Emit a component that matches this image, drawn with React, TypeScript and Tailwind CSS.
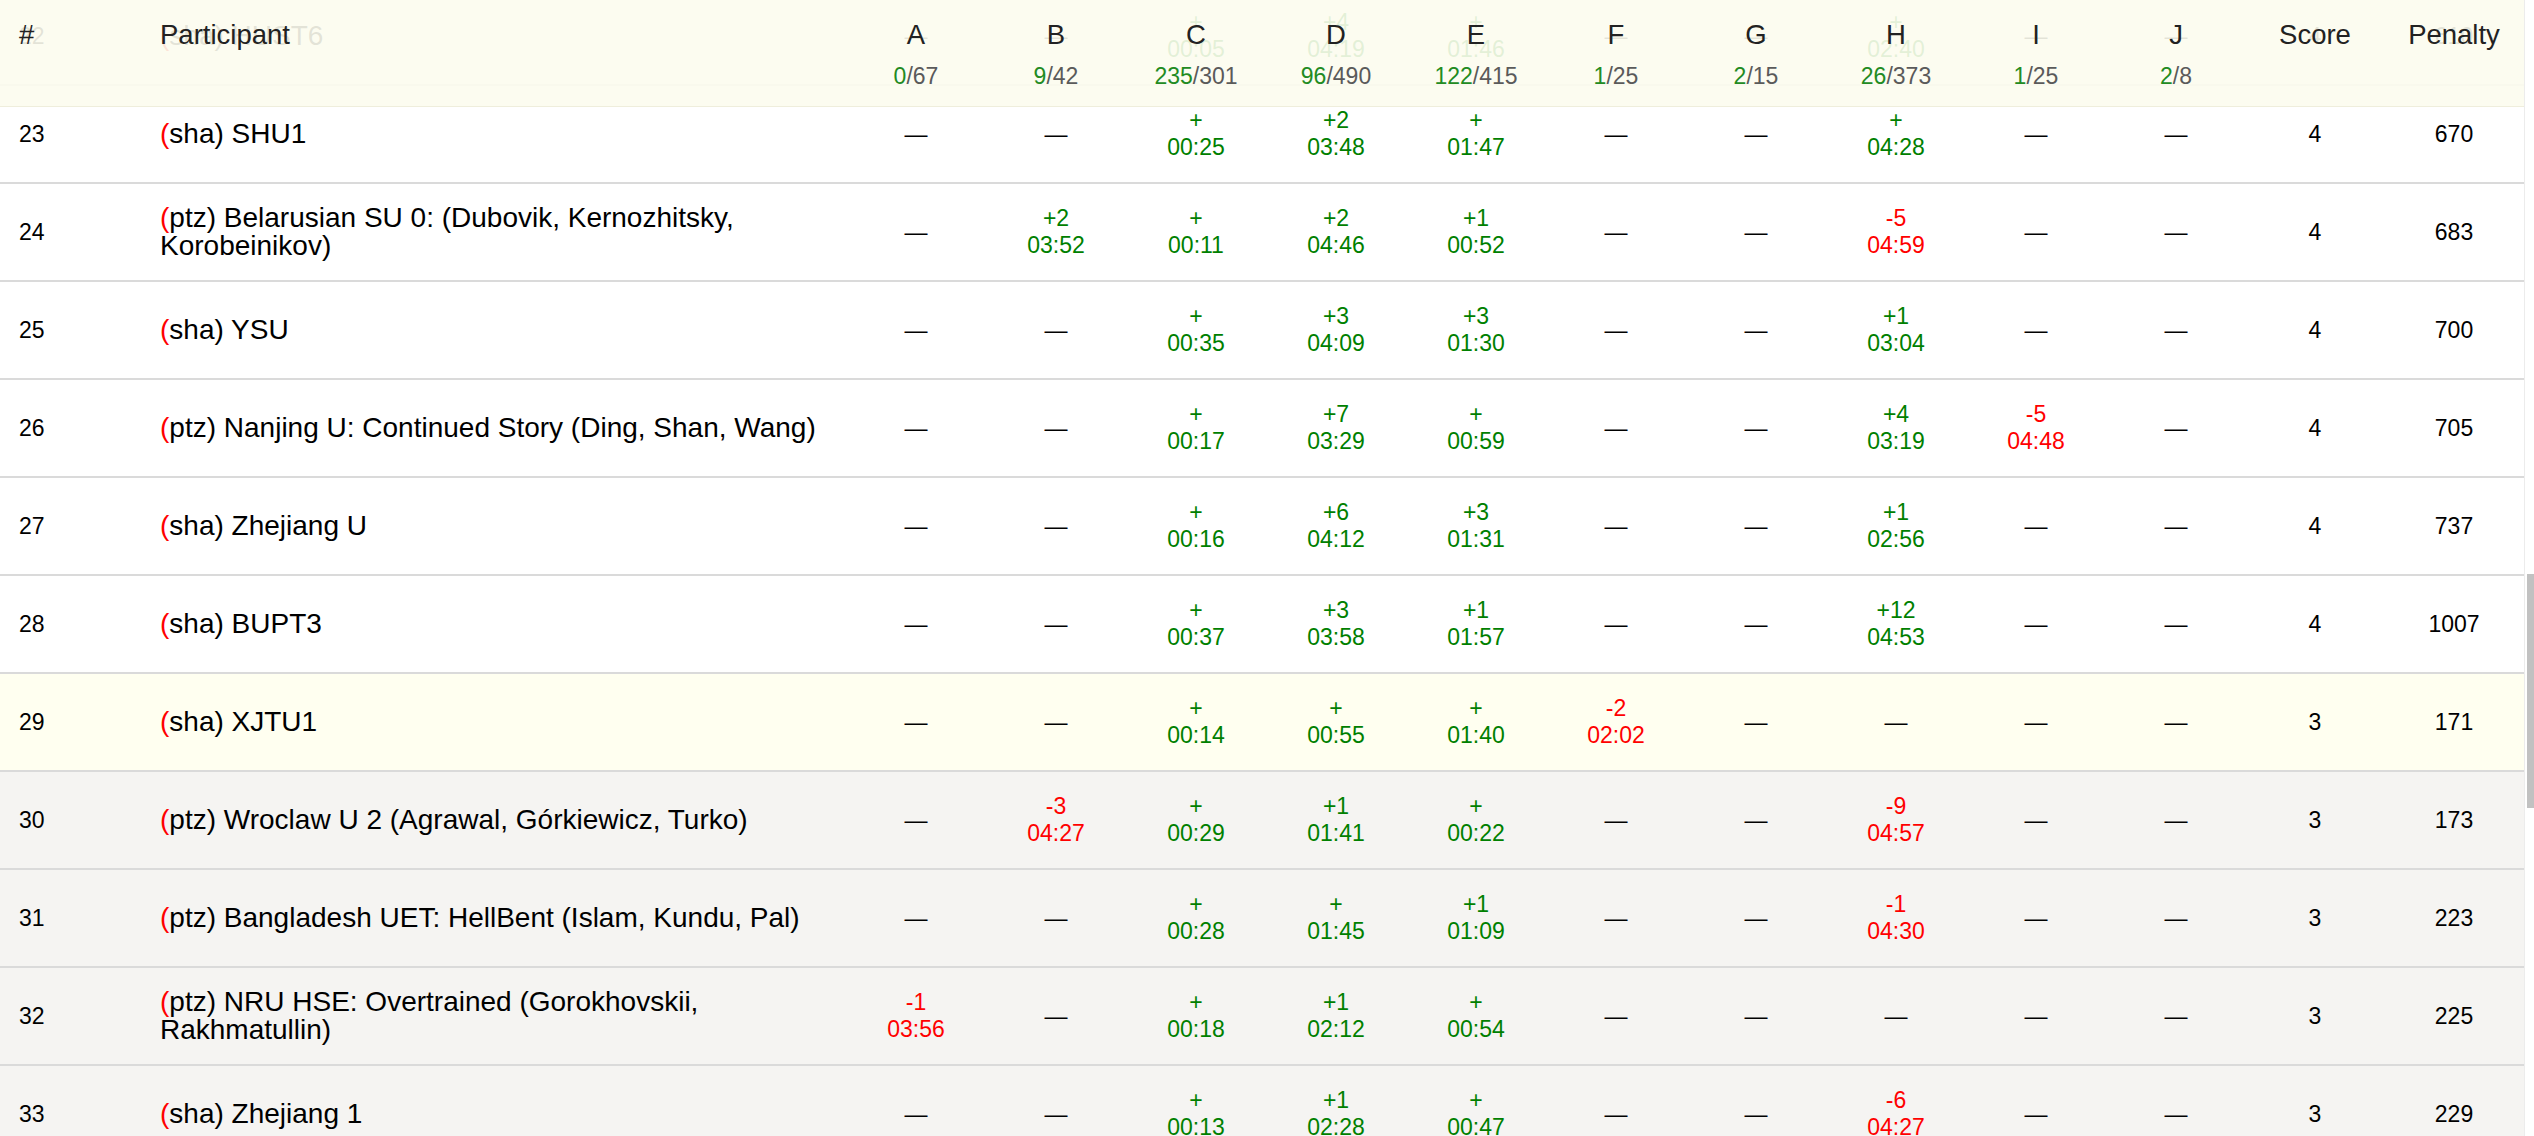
import React from "react";

type Run = { p: string; t: string; ok: boolean } | null;

interface Team {
  rank: number;
  site: string;
  name: string;
  runs: Run[];
  score: number;
  penalty: number;
  bg: string;
}

const ok = (p: string, t: string): Run => ({ p, t, ok: true });
const bad = (p: string, t: string): Run => ({ p, t, ok: false });
const _ = null;

const problems = [
  { id: "A", solved: 0, tried: 67 },
  { id: "B", solved: 9, tried: 42 },
  { id: "C", solved: 235, tried: 301 },
  { id: "D", solved: 96, tried: 490 },
  { id: "E", solved: 122, tried: 415 },
  { id: "F", solved: 1, tried: 25 },
  { id: "G", solved: 2, tried: 15 },
  { id: "H", solved: 26, tried: 373 },
  { id: "I", solved: 1, tried: 25 },
  { id: "J", solved: 2, tried: 8 },
];

const teams: Team[] = [
  { rank: 22, site: "sha", name: "HUST6", runs: [_, _, ok("+", "00:05"), ok("+4", "04:19"), ok("+", "01:46"), _, _, ok("+", "02:40"), _, _], score: 4, penalty: 610, bg: "bg-white" },
  { rank: 23, site: "sha", name: "SHU1", runs: [_, _, ok("+", "00:25"), ok("+2", "03:48"), ok("+", "01:47"), _, _, ok("+", "04:28"), _, _], score: 4, penalty: 670, bg: "bg-white" },
  { rank: 24, site: "ptz", name: "Belarusian SU 0: (Dubovik, Kernozhitsky, Korobeinikov)", runs: [_, ok("+2", "03:52"), ok("+", "00:11"), ok("+2", "04:46"), ok("+1", "00:52"), _, _, bad("-5", "04:59"), _, _], score: 4, penalty: 683, bg: "bg-white" },
  { rank: 25, site: "sha", name: "YSU", runs: [_, _, ok("+", "00:35"), ok("+3", "04:09"), ok("+3", "01:30"), _, _, ok("+1", "03:04"), _, _], score: 4, penalty: 700, bg: "bg-white" },
  { rank: 26, site: "ptz", name: "Nanjing U: Continued Story (Ding, Shan, Wang)", runs: [_, _, ok("+", "00:17"), ok("+7", "03:29"), ok("+", "00:59"), _, _, ok("+4", "03:19"), bad("-5", "04:48"), _], score: 4, penalty: 705, bg: "bg-white" },
  { rank: 27, site: "sha", name: "Zhejiang U", runs: [_, _, ok("+", "00:16"), ok("+6", "04:12"), ok("+3", "01:31"), _, _, ok("+1", "02:56"), _, _], score: 4, penalty: 737, bg: "bg-white" },
  { rank: 28, site: "sha", name: "BUPT3", runs: [_, _, ok("+", "00:37"), ok("+3", "03:58"), ok("+1", "01:57"), _, _, ok("+12", "04:53"), _, _], score: 4, penalty: 1007, bg: "bg-white" },
  { rank: 29, site: "sha", name: "XJTU1", runs: [_, _, ok("+", "00:14"), ok("+", "00:55"), ok("+", "01:40"), bad("-2", "02:02"), _, _, _, _], score: 3, penalty: 171, bg: "bg-[#fffff0]" },
  { rank: 30, site: "ptz", name: "Wroclaw U 2 (Agrawal, Górkiewicz, Turko)", runs: [_, bad("-3", "04:27"), ok("+", "00:29"), ok("+1", "01:41"), ok("+", "00:22"), _, _, bad("-9", "04:57"), _, _], score: 3, penalty: 173, bg: "bg-[#f5f4f2]" },
  { rank: 31, site: "ptz", name: "Bangladesh UET: HellBent (Islam, Kundu, Pal)", runs: [_, _, ok("+", "00:28"), ok("+", "01:45"), ok("+1", "01:09"), _, _, bad("-1", "04:30"), _, _], score: 3, penalty: 223, bg: "bg-[#f5f4f2]" },
  { rank: 32, site: "ptz", name: "NRU HSE: Overtrained (Gorokhovskii, Rakhmatullin)", runs: [bad("-1", "03:56"), _, ok("+", "00:18"), ok("+1", "02:12"), ok("+", "00:54"), _, _, _, _, _], score: 3, penalty: 225, bg: "bg-[#f5f4f2]" },
  { rank: 33, site: "sha", name: "Zhejiang 1", runs: [_, _, ok("+", "00:13"), ok("+1", "02:28"), ok("+", "00:47"), _, _, bad("-6", "04:27"), _, _], score: 3, penalty: 229, bg: "bg-[#f5f4f2]" },
];

const cols = "grid grid-cols-[160px_686px_repeat(10,140px)_138px_140px]";

function RunCell({ run }: { run: Run }) {
  if (!run) {
    return <div className="text-center text-[23px] leading-[27px] text-black">—</div>;
  }
  return (
    <div
      className={`text-center text-[23px] leading-[27px] ${run.ok ? "text-[#008000]" : "text-[#ff0000]"}`}
    >
      <div>{run.p}</div>
      <div>{run.t}</div>
    </div>
  );
}

function TeamRow({ team }: { team: Team }) {
  return (
    <div className={`${cols} h-[98px] items-center border-b-2 border-[#dadada] ${team.bg}`}>
      <div className="pl-[19px] text-[23px] text-black">{team.rank}</div>
      <div className="text-[28px] leading-[27.7px] text-black">
        <span className="text-[#ff0000]">(</span>
        {team.site}) {team.name}
      </div>
      {team.runs.map((r, i) => (
        <RunCell key={i} run={r} />
      ))}
      <div className="text-center text-[23px] text-black">{team.score}</div>
      <div className="text-center text-[23px] text-black">{team.penalty}</div>
    </div>
  );
}

export default function App() {
  return (
    <div className="flex h-[1136px] w-[2534px] overflow-hidden bg-white font-['Liberation_Sans',Arial,sans-serif]">
      <div className="relative flex-1 overflow-hidden">
        {/* standings body, scrolled so row 22 sits under the header */}
        <div className="-mt-[12px]">
          {teams.map((t) => (
            <TeamRow key={t.rank} team={t} />
          ))}
        </div>

        {/* sticky header over the rows */}
        <div className={`${cols} absolute left-0 right-0 top-0 h-[107px] items-start border-b border-[#efeedc] bg-[#fcfcee]/90 pt-[19px] text-[#222]`}>
          <div className="pl-[19px] text-[27.5px] leading-[32px]">#</div>
          <div className="text-[27.5px] leading-[32px]">Participant</div>
          {problems.map((p) => (
            <div key={p.id} className="flex flex-col items-center">
              <div className="text-[27.5px] leading-[32px]">{p.id}</div>
              <div className="mt-[12px] text-[23px] leading-[27px] text-[#5a5a5a]">
                <span className="text-[#228b22]">{p.solved}</span>/{p.tried}
              </div>
            </div>
          ))}
          <div className="text-center text-[27.5px] leading-[32px]">Score</div>
          <div className="text-center text-[27.5px] leading-[32px]">Penalty</div>
        </div>
      </div>

      {/* scrollbar */}
      <div className="flex w-[10px] flex-col border-l border-[#ececec] bg-white">
        <div className="ml-auto mt-[574px] h-[234px] w-[7px] bg-[#c1c1c1]" />
      </div>
    </div>
  );
}
